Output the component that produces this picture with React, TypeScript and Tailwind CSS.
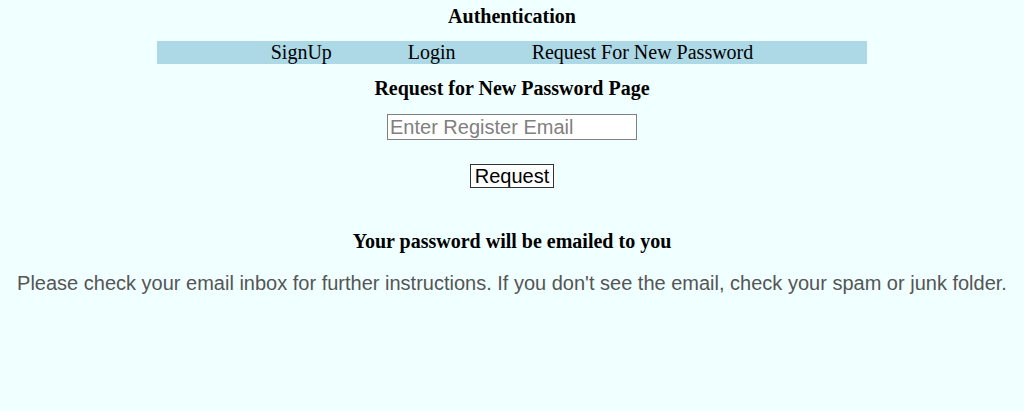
export default function App() {
  return (
    <div className="min-h-[411px] w-full bg-[#f0ffff] flex flex-col items-center font-['Liberation_Serif',serif] text-black">
      <h3 className="mt-[5px] text-[20px] leading-[22px] font-bold">Authentication</h3>

      <nav className="mt-[14px] w-[710px] h-[23px] bg-[#add8e6] flex justify-center gap-[76px] text-[20px] leading-[23px]">
        <a className="cursor-pointer">SignUp</a>
        <a className="cursor-pointer">Login</a>
        <a className="cursor-pointer">Request For New Password</a>
      </nav>

      <h3 className="mt-[13px] text-[20px] leading-[22px] font-bold">Request for New Password Page</h3>

      <input
        type="email"
        placeholder="Enter Register Email"
        className="mt-[15px] w-[250px] h-[26px] border border-[#808080] bg-white px-[2px] text-[20px] font-['Liberation_Sans',sans-serif] placeholder:text-[#808080] outline-none"
      />

      <button className="mt-[24px] h-[24px] border border-[#333] bg-white px-[4px] text-[20px] leading-[22px] font-['Liberation_Sans',sans-serif] text-black">
        Request
      </button>

      <h3 className="mt-[42px] text-[20px] leading-[22px] font-bold">Your password will be emailed to you</h3>

      <p className="mt-[19px] text-[20px] leading-[24px] text-[#555] font-['Liberation_Sans',sans-serif] text-center">
        Please check your email inbox for further instructions. If you don't see the email, check your spam or junk folder.
      </p>
    </div>
  );
}
